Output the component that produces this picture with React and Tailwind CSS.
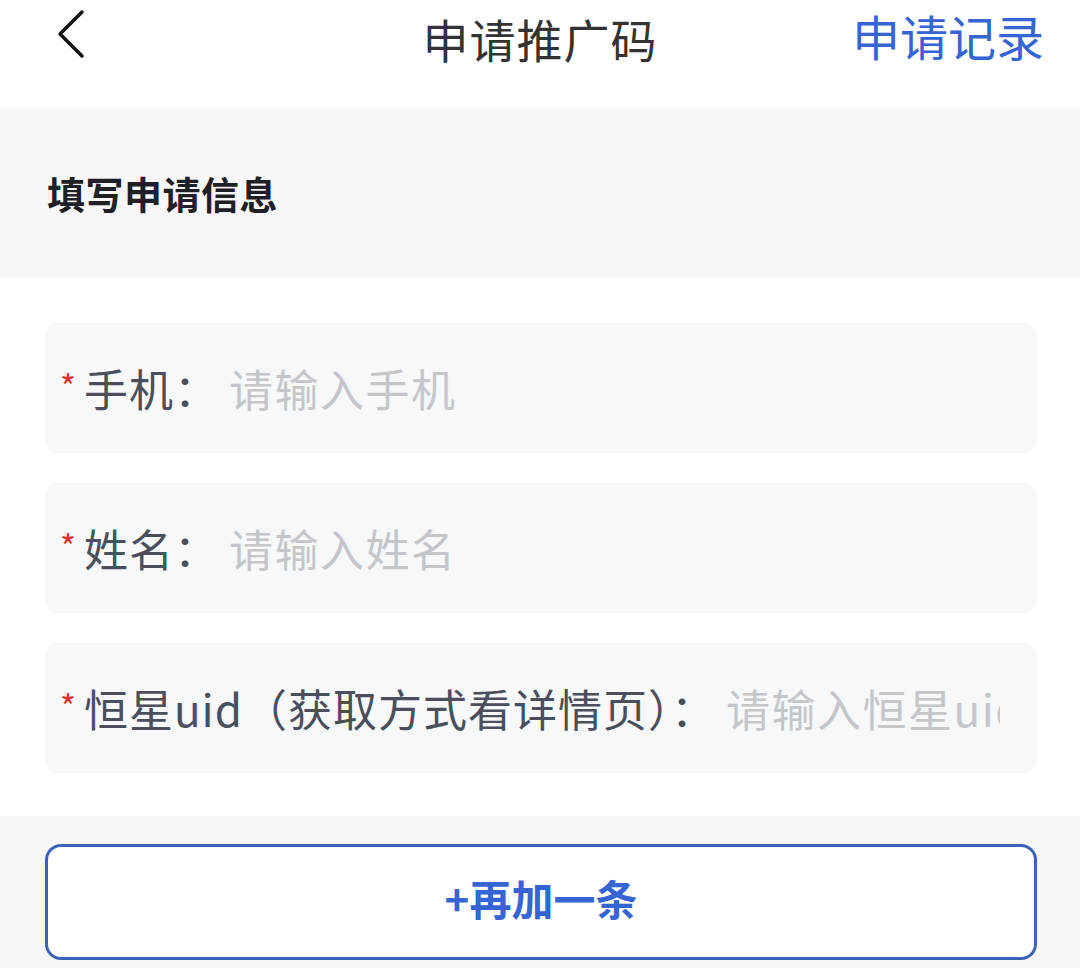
import { useState } from 'react';

const font = { fontFamily: '"Noto Sans CJK SC", "Noto Sans", sans-serif' };

const fields = [
  { key: 'phone', label: '手机：', placeholder: '请输入手机' },
  { key: 'name', label: '姓名：', placeholder: '请输入姓名' },
  { key: 'uid', label: '恒星uid（获取方式看详情页）：', placeholder: '请输入恒星uid' },
];

const Field = ({ label, placeholder, value, onChange }) => (
  <div className="flex items-center h-[130px] rounded-[14px] bg-[#f7f8fa] pl-[15px] pr-[37px]">
    <span className="self-start mt-[46px] mr-[8px] text-[34px] leading-none text-[#e0302e]">*</span>
    <span className="shrink-0 text-[44px] leading-none text-[#4b4f5c] tracking-[1px]">{label}</span>
    <input
      value={value}
      onChange={(e) => onChange(e.target.value)}
      placeholder={placeholder}
      className="flex-1 min-w-0 ml-[10px] bg-transparent outline-none text-[44px] leading-none tracking-[1.5px] text-[#333] placeholder:text-[#c5c6ca]"
      style={font}
    />
  </div>
);

export default function App() {
  const [values, setValues] = useState({});

  return (
    <div className="w-[1080px] h-[968px] overflow-hidden bg-white" style={font}>
      {/* Header */}
      <div className="relative flex items-center justify-center h-[76px]">
        <button className="absolute left-[50px] top-[6px] w-[40px] h-[56px] flex items-center justify-center">
          <svg width="30" height="50" viewBox="0 0 30 50" fill="none">
            <path d="M27 3 L5 25 L27 47" stroke="#111" strokeWidth="3.5" strokeLinecap="round" strokeLinejoin="round" />
          </svg>
        </button>
        <h1 className="text-[46px] leading-none text-[#333] font-normal tracking-[1px]">申请推广码</h1>
        <span className="absolute right-[36px] top-[11px] text-[48px] leading-none text-[#3565d4]">申请记录</span>
      </div>
      <div className="h-[32px]" />

      {/* Section title */}
      <div className="flex items-center h-[170px] bg-[#f7f7f9] px-[47px]">
        <h2 className="text-[38px] font-bold text-[#1f2025] leading-none tracking-[0.5px]">填写申请信息</h2>
      </div>

      {/* Form fields */}
      <div className="flex flex-col gap-[30px] pl-[45px] pr-[43px] pt-[45px] pb-[43px]">
        {fields.map((f) => (
          <Field
            key={f.key}
            label={f.label}
            placeholder={f.placeholder}
            value={values[f.key] || ''}
            onChange={(v) => setValues({ ...values, [f.key]: v })}
          />
        ))}
      </div>

      {/* Add more */}
      <div className="bg-[#f7f7f9] pl-[45px] pr-[43px] pt-[28px] pb-[20px]">
        <button className="w-full h-[116px] rounded-[16px] border-[3px] border-[#3a62b8] bg-white flex items-center justify-center pb-[8px]">
          <span className="text-[42px] font-bold text-[#3565d4] leading-none">+再加一条</span>
        </button>
      </div>
    </div>
  );
}
